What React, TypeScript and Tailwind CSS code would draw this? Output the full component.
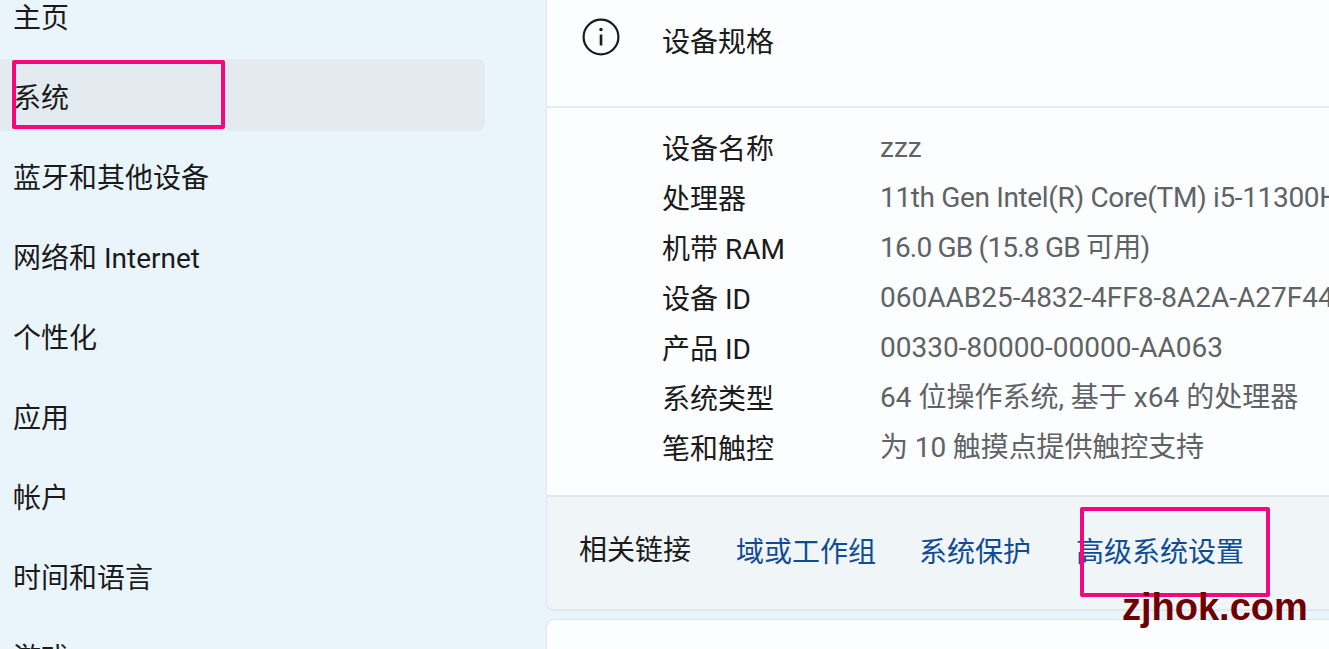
const navItems = ['主页', '系统', '蓝牙和其他设备', '网络和 Internet', '个性化', '应用', '帐户', '时间和语言', '游戏'];

const specs = [
  ['设备名称', 'zzz', ''],
  ['处理器', '11th Gen Intel(R) Core(TM) i5-11300H', 'tracking-[-0.35px]'],
  ['机带 RAM', '16.0 GB (15.8 GB 可用)', 'tracking-[-0.8px]'],
  ['设备 ID', '060AAB25-4832-4FF8-8A2A-A27F44', ''],
  ['产品 ID', '00330-80000-00000-AA063', ''],
  ['系统类型', '64 位操作系统, 基于 x64 的处理器', ''],
  ['笔和触控', '为 10 触摸点提供触控支持', 'tracking-[-0.1px]'],
];

export default function App() {
  return (
    <div className="relative flex h-[649px] w-[1329px] overflow-hidden bg-[#eaf5fb] font-['Roboto','Noto_Sans_CJK_SC',sans-serif] text-[28px] text-[#1b1b1b]">
      {/* Sidebar */}
      <nav className="-mt-[25px] w-[546px] shrink-0">
        {navItems.map((item) => (
          <div key={item} className="flex h-20 items-center pr-[61px]">
            <div className={`flex h-[72px] w-full items-center whitespace-nowrap rounded-r-lg pl-[13px] pt-2 ${item === '系统' ? 'bg-[#e3ebf0]' : ''}`}>
              {item}
            </div>
          </div>
        ))}
      </nav>

      {/* Main */}
      <main className="flex min-w-0 flex-1 flex-col">
        <section className="h-[611px] shrink-0 overflow-hidden rounded-bl-lg border-b-2 border-l border-[#dfe8ea] bg-[#fbfdfe]">
          <div className="flex h-[108px] items-start border-b-2 border-[#e3edf0] pl-[35px] pt-[18px]">
            <svg width="38" height="38" viewBox="0 0 38 38" fill="none" stroke="#1b1b1b" strokeWidth="2.2">
              <circle cx="19" cy="19" r="17.4" />
              <path d="M19 16.5v11" strokeWidth="2.6" />
              <circle cx="19" cy="11.5" r="1.7" fill="#1b1b1b" stroke="none" />
            </svg>
            <span className="ml-[42px] mt-[5px] leading-[40px]">设备规格</span>
          </div>
          <div className="h-[387px] pt-[15px]">
            {specs.map(([label, value, tracking]) => (
              <div key={label} className="flex h-[50px] items-center whitespace-nowrap pl-[115px]">
                <span className="mt-[4px] w-[218px] shrink-0">{label}</span>
                <span className={`text-[#5f6365] ${tracking}`}>{value}</span>
              </div>
            ))}
          </div>
          <div className="flex h-[115px] items-start border-t-2 border-[#dfe9ea] bg-[#f0f5f7] pl-8 pt-[33px]">
            <span className="leading-[42px]">相关链接</span>
            <a className="ml-[45px] mt-[2px] leading-[42px] text-[#0f4c94]">域或工作组</a>
            <a className="ml-[43px] mt-[2px] leading-[42px] text-[#0f4c94]">系统保护</a>
            <a className="ml-[45px] mt-[2px] leading-[42px] text-[#0f4c94]">高级系统设置</a>
          </div>
        </section>
        <section className="mt-2 flex-1 rounded-tl-lg border-l border-t border-[#dfe8ea] bg-[#fbfdfe]" />
      </main>

      {/* Annotations over the screenshot */}
      <div className="absolute left-3 top-[60px] h-[69px] w-[213px] rounded-[2px] border-[4px] border-[#f5087f]" />
      <div className="absolute left-[1080px] top-[507px] h-[90px] w-[190px] rounded-[2px] border-[4px] border-[#f5087f]" />
      <div className="absolute left-[1122px] top-[586px] font-['Liberation_Sans',sans-serif] text-[38px] font-bold leading-[42px] text-[#6f0000]">
        zjhok.com
      </div>
    </div>
  );
}
